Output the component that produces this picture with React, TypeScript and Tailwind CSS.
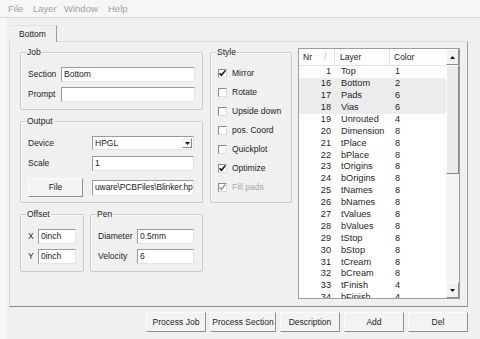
import React from "react";

const inputCls =
  "bg-white border border-t-[#9a9a9a] border-l-[#9a9a9a] border-r-[#e4e4e4] border-b-[#e4e4e4] flex items-center pl-[2px] text-[8.5px] text-[#1a1a1a] overflow-hidden whitespace-nowrap leading-none";

const btnCls =
  "bg-[#f3f3f3] border border-t-[#fbfbfb] border-l-[#fbfbfb] border-r-[#8e8e8e] border-b-[#8e8e8e] flex items-center justify-center text-[8.5px] text-[#222] leading-none";

function Group({
  label,
  className,
  children,
}: {
  label: string;
  className: string;
  children?: React.ReactNode;
}) {
  return (
    <div
      className={
        "relative border border-[#cacaca] rounded-[2px] shadow-[inset_1px_1px_0_#fafafa] " +
        className
      }
    >
      <span className="absolute -top-[6px] left-[5px] bg-[#f0f0f0] px-[1px] text-[8.5px] leading-[10px] text-[#222]">
        {label}
      </span>
      {children}
    </div>
  );
}

function Check({ checked, disabled, label }: { checked?: boolean; disabled?: boolean; label: string }) {
  return (
    <div className="h-[19px] flex items-center">
      <div className="w-[9px] h-[9px] bg-white border border-t-[#8a8a8a] border-l-[#8a8a8a] border-r-[#dcdcdc] border-b-[#dcdcdc] relative">
        {checked && (
          <svg width="9" height="9" viewBox="0 0 9 9" className="absolute -left-[1px] -top-[1px]">
            <polyline
              points="1.6,4.2 3.4,6.3 7.4,1.6"
              fill="none"
              stroke={disabled ? "#9a9a9a" : "#111"}
              strokeWidth="1.5"
            />
          </svg>
        )}
      </div>
      <span className={"ml-[5px] text-[8.5px] leading-none " + (disabled ? "text-[#a8a8a8]" : "text-[#222]")}>
        {label}
      </span>
    </div>
  );
}

function Tri({ down }: { down?: boolean }) {
  return (
    <svg width="5" height="3" viewBox="0 0 5 3">
      <polygon points={down ? "0,0 5,0 2.5,3" : "0,3 5,3 2.5,0"} fill="#111" />
    </svg>
  );
}

const rows: [number, string, number][] = [
  [1, "Top", 1],
  [16, "Bottom", 2],
  [17, "Pads", 6],
  [18, "Vias", 6],
  [19, "Unrouted", 4],
  [20, "Dimension", 8],
  [21, "tPlace", 8],
  [22, "bPlace", 8],
  [23, "tOrigins", 8],
  [24, "bOrigins", 8],
  [25, "tNames", 8],
  [26, "bNames", 8],
  [27, "tValues", 8],
  [28, "bValues", 8],
  [29, "tStop", 8],
  [30, "bStop", 8],
  [31, "tCream", 8],
  [32, "bCream", 8],
  [33, "tFinish", 4],
  [34, "bFinish", 4],
];

export default function App() {
  return (
    <div className="w-[480px] h-[339px] bg-[#f0f0f0] flex flex-col overflow-hidden text-[#1e1e1e] font-['Liberation_Sans',Arial,sans-serif]">
      {/* menu bar */}
      <div className="h-[18px] shrink-0 flex items-center pl-[8px] bg-[#f5f6f7] border-b border-[#d8d8d8] text-[9.5px] text-[#a2a2a2] leading-none">
        <span className="w-[25px]">File</span>
        <span className="w-[31px]">Layer</span>
        <span className="w-[44px]">Window</span>
        <span>Help</span>
      </div>

      <div className="flex-1 flex">
        <div className="w-[6px] bg-[#f5f8fc]" />
        <div className="flex-1 flex flex-col pl-[3px] pt-[7px]">
          {/* tab header */}
          <div className="h-[17px] w-[47px] ml-[1px] flex items-center pl-[9px] text-[8.5px] leading-none text-[#222] bg-[#f0f0f0] border-t border-r border-t-[#e2e2e2] border-r-[#9a9a9a] relative z-10 -mb-[1px]">
            Bottom
          </div>

          {/* tab page */}
          <div className="w-[459px] h-[266px] border border-t-[#dcdcdc] border-l-[#d8d8d8] border-r-[#a2a2a2] border-b-[#8a8a8a] flex items-start">
            {/* left column */}
            <div className="ml-[10px] mt-[10px] w-[183px] flex flex-col">
              <Group label="Job" className="h-[58px]">
                <div className="flex flex-col pt-[14px] pl-[7px] gap-[5px]">
                  <div className="flex items-center h-[15px]">
                    <span className="w-[33px] text-[8.5px] leading-none">Section</span>
                    <div className={inputCls + " w-[134px] h-[15px]"}>Bottom</div>
                  </div>
                  <div className="flex items-center h-[15px]">
                    <span className="w-[33px] text-[8.5px] leading-none">Prompt</span>
                    <div className={inputCls + " w-[134px] h-[15px]"} />
                  </div>
                </div>
              </Group>

              <Group label="Output" className="h-[82px] mt-[11px]">
                <div className="flex flex-col pt-[14px] pl-[7px]">
                  <div className="flex items-center h-[14px]">
                    <span className="w-[64px] text-[8.5px] leading-none">Device</span>
                    <div className={inputCls + " w-[102px] h-[14px] justify-between pr-[1px]"}>
                      <span>HPGL</span>
                      <div className="w-[10px] h-[10px] bg-[#f4f4f4] border border-t-[#fafafa] border-l-[#fafafa] border-r-[#8a8a8a] border-b-[#8a8a8a] flex items-center justify-center">
                        <Tri down />
                      </div>
                    </div>
                  </div>
                  <div className="flex items-center h-[15px] mt-[6px]">
                    <span className="w-[64px] text-[8.5px] leading-none">Scale</span>
                    <div className={inputCls + " w-[102px] h-[15px]"}>1</div>
                  </div>
                  <div className="flex items-center h-[19px] mt-[7px]">
                    <div className={btnCls + " w-[55px] h-[19px]"}>File</div>
                    <div className={inputCls + " w-[102px] h-[16px] ml-[9px] pl-[1px] text-[8.2px] tracking-[-0.12px]"}>
                      uware\PCBFiles\Blinker.hp
                    </div>
                  </div>
                </div>
              </Group>

              <div className="flex gap-[6px] mt-[11px]">
                <Group label="Offset" className="w-[64px] h-[58px]">
                  <div className="flex flex-col pt-[14px] pl-[7px] gap-[5px]">
                    <div className="flex items-center h-[15px]">
                      <span className="w-[10px] text-[8.5px] leading-none">X</span>
                      <div className={inputCls + " w-[38px] h-[15px]"}>0inch</div>
                    </div>
                    <div className="flex items-center h-[15px]">
                      <span className="w-[10px] text-[8.5px] leading-none">Y</span>
                      <div className={inputCls + " w-[38px] h-[15px]"}>0inch</div>
                    </div>
                  </div>
                </Group>
                <Group label="Pen" className="w-[113px] h-[58px]">
                  <div className="flex flex-col pt-[14px] pl-[7px] gap-[5px]">
                    <div className="flex items-center h-[15px]">
                      <span className="w-[39px] text-[8.5px] leading-none">Diameter</span>
                      <div className={inputCls + " w-[57px] h-[15px]"}>0.5mm</div>
                    </div>
                    <div className="flex items-center h-[15px]">
                      <span className="w-[39px] text-[8.5px] leading-none">Velocity</span>
                      <div className={inputCls + " w-[57px] h-[15px]"}>6</div>
                    </div>
                  </div>
                </Group>
              </div>
            </div>

            {/* style */}
            <Group label="Style" className="ml-[7px] mt-[10px] w-[82px] h-[151px]">
              <div className="flex flex-col pt-[11px] pl-[7px]">
                <Check checked label="Mirror" />
                <Check label="Rotate" />
                <Check label="Upside down" />
                <Check label="pos. Coord" />
                <Check label="Quickplot" />
                <Check checked label="Optimize" />
                <Check checked disabled label="Fill pads" />
              </div>
            </Group>

            {/* list */}
            <div className="ml-[6px] mt-[6px] w-[162px] h-[251px] border border-[#9c9c9c] bg-white flex overflow-hidden">
              <div className="w-[147px] flex flex-col overflow-hidden">
                <div className="h-[17px] shrink-0 flex bg-[#fdfdfd] border-b border-[#e2e2e2] text-[8.5px] leading-none text-[#222]">
                  <div className="w-[36px] flex items-center pl-[4px] border-r border-[#e2e2e2]">
                    <span>Nr</span>
                    <span className="ml-[12px] text-[#b8b8b8]">/</span>
                  </div>
                  <div className="w-[55px] flex items-center pl-[5px] border-r border-[#e2e2e2]">Layer</div>
                  <div className="flex-1 flex items-center pl-[4px]">Color</div>
                </div>
                {rows.map(([n, name, c]) => (
                  <div
                    key={n}
                    className={
                      "h-[11.9px] shrink-0 flex items-center text-[9.2px] leading-none text-[#1e1e1e] " +
                      (n >= 16 && n <= 18 ? "bg-[#ececec]" : "")
                    }
                  >
                    <div className="w-[36px] text-right pr-[4px]">{n}</div>
                    <div className="w-[55px] pl-[6px]">{name}</div>
                    <div className="flex-1 pl-[5px]">{c}</div>
                  </div>
                ))}
              </div>
              <div className="w-[13px] flex flex-col bg-[#f4f4f4]">
                <div className="h-[16px] shrink-0 bg-[#f2f2f2] border border-t-[#fbfbfb] border-l-[#fbfbfb] border-r-[#8a8a8a] border-b-[#8a8a8a] flex items-center justify-center">
                  <Tri />
                </div>
                <div className="h-[109px] shrink-0 bg-[#ebebeb] border border-t-[#fbfbfb] border-l-[#fbfbfb] border-r-[#8a8a8a] border-b-[#8a8a8a]" />
                <div className="flex-1" />
                <div className="h-[16px] shrink-0 bg-[#f2f2f2] border border-t-[#fbfbfb] border-l-[#fbfbfb] border-r-[#8a8a8a] border-b-[#8a8a8a] flex items-center justify-center">
                  <Tri down />
                </div>
              </div>
            </div>
          </div>

          {/* buttons */}
          <div className="flex gap-[4px] pl-[137px] mt-[5px]">
            <div className={btnCls + " w-[60px] h-[20px]"}>Process Job</div>
            <div className={btnCls + " w-[66px] h-[20px]"}>Process Section</div>
            <div className={btnCls + " w-[60px] h-[20px]"}>Description</div>
            <div className={btnCls + " w-[60px] h-[20px]"}>Add</div>
            <div className={btnCls + " w-[60px] h-[20px]"}>Del</div>
          </div>
        </div>
      </div>
    </div>
  );
}
